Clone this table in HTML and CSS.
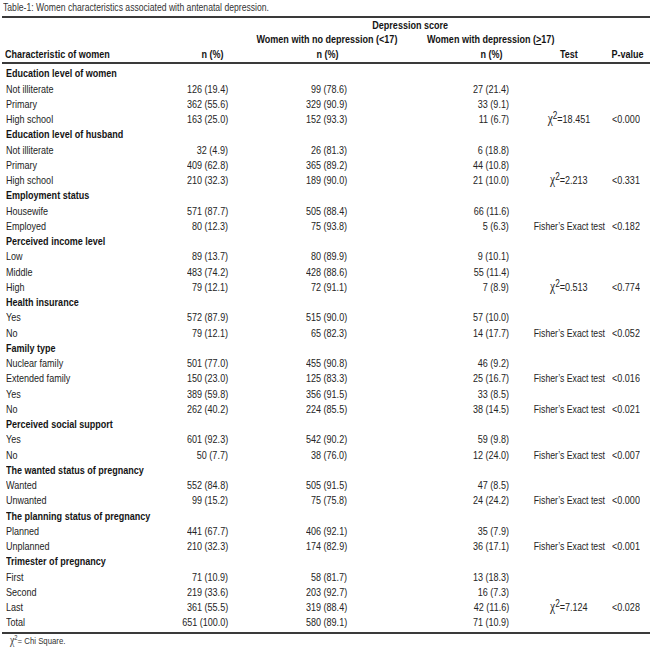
FILE: index.html
```html
<!DOCTYPE html>
<html lang="en">
<head>
<meta charset="utf-8">
<title>Table-1</title>
<link rel="stylesheet" href="styles.css">
</head>
<body>
<div class="caption"><span class="s">Table-1: Women characteristics associated with antenatal depression.</span></div>
<table class="tbl">
  <colgroup>
    <col class="w0"><col class="w1"><col class="w2"><col class="w3"><col class="w4"><col class="w5">
  </colgroup>
  <thead>
    <tr class="hr1">
      <th></th><th></th>
      <th colspan="2" class="h-dep"><span class="s">Depression score</span></th>
      <th></th><th></th>
    </tr>
    <tr class="hr2">
      <th></th><th></th>
      <th class="h-c2"><span class="s wide">Women with no depression (&lt;17)</span></th>
      <th class="h-c3"><span class="s wide">Women with depression (<span class="ge">&gt;</span>17)</span></th>
      <th></th><th></th>
    </tr>
    <tr class="hr3">
      <th class="h-lab"><span class="s">Characteristic of women</span></th>
      <th class="h-c1"><span class="s">n (%)</span></th>
      <th class="h-c2"><span class="s">n (%)</span></th>
      <th class="h-c3"><span class="s">n (%)</span></th>
      <th class="h-t"><span class="s">Test</span></th>
      <th class="h-p"><span class="s">P-value</span></th>
    </tr>
  </thead>
  <tbody>
    <tr class="cat first"><td colspan="6"><span class="s">Education level of women</span></td></tr>
    <tr><td class="lab"><span class="s">Not illiterate</span></td><td class="c1"><span class="s">126 (19.4)</span></td><td class="c2"><span class="s">99 (78.6)</span></td><td class="c3"><span class="s">27 (21.4)</span></td><td class="t"></td><td class="p"></td></tr>
    <tr><td class="lab"><span class="s">Primary</span></td><td class="c1"><span class="s">362 (55.6)</span></td><td class="c2"><span class="s">329 (90.9)</span></td><td class="c3"><span class="s">33 (9.1)</span></td><td class="t"></td><td class="p"></td></tr>
    <tr><td class="lab"><span class="s">High school</span></td><td class="c1"><span class="s">163 (25.0)</span></td><td class="c2"><span class="s">152 (93.3)</span></td><td class="c3"><span class="s">11 (6.7)</span></td><td class="t"><span class="s"><span class="chi">χ</span><sup>2</sup>=18.451</span></td><td class="p"><span class="s">&lt;0.000</span></td></tr>

    <tr class="cat"><td colspan="6"><span class="s">Education level of husband</span></td></tr>
    <tr><td class="lab"><span class="s">Not illiterate</span></td><td class="c1"><span class="s">32 (4.9)</span></td><td class="c2"><span class="s">26 (81.3)</span></td><td class="c3"><span class="s">6 (18.8)</span></td><td class="t"></td><td class="p"></td></tr>
    <tr><td class="lab"><span class="s">Primary</span></td><td class="c1"><span class="s">409 (62.8)</span></td><td class="c2"><span class="s">365 (89.2)</span></td><td class="c3"><span class="s">44 (10.8)</span></td><td class="t"></td><td class="p"></td></tr>
    <tr><td class="lab"><span class="s">High school</span></td><td class="c1"><span class="s">210 (32.3)</span></td><td class="c2"><span class="s">189 (90.0)</span></td><td class="c3"><span class="s">21 (10.0)</span></td><td class="t"><span class="s"><span class="chi">χ</span><sup>2</sup>=2.213</span></td><td class="p"><span class="s">&lt;0.331</span></td></tr>

    <tr class="cat"><td colspan="6"><span class="s">Employment status</span></td></tr>
    <tr><td class="lab"><span class="s">Housewife</span></td><td class="c1"><span class="s">571 (87.7)</span></td><td class="c2"><span class="s">505 (88.4)</span></td><td class="c3"><span class="s">66 (11.6)</span></td><td class="t"></td><td class="p"></td></tr>
    <tr><td class="lab"><span class="s">Employed</span></td><td class="c1"><span class="s">80 (12.3)</span></td><td class="c2"><span class="s">75 (93.8)</span></td><td class="c3"><span class="s">5 (6.3)</span></td><td class="t"><span class="s fx">Fisher’s Exact test</span></td><td class="p"><span class="s">&lt;0.182</span></td></tr>

    <tr class="cat"><td colspan="6"><span class="s">Perceived income level</span></td></tr>
    <tr><td class="lab"><span class="s">Low</span></td><td class="c1"><span class="s">89 (13.7)</span></td><td class="c2"><span class="s">80 (89.9)</span></td><td class="c3"><span class="s">9 (10.1)</span></td><td class="t"></td><td class="p"></td></tr>
    <tr><td class="lab"><span class="s">Middle</span></td><td class="c1"><span class="s">483 (74.2)</span></td><td class="c2"><span class="s">428 (88.6)</span></td><td class="c3"><span class="s">55 (11.4)</span></td><td class="t"></td><td class="p"></td></tr>
    <tr><td class="lab"><span class="s">High</span></td><td class="c1"><span class="s">79 (12.1)</span></td><td class="c2"><span class="s">72 (91.1)</span></td><td class="c3"><span class="s">7 (8.9)</span></td><td class="t"><span class="s"><span class="chi">χ</span><sup>2</sup>=0.513</span></td><td class="p"><span class="s">&lt;0.774</span></td></tr>

    <tr class="cat"><td colspan="6"><span class="s">Health insurance</span></td></tr>
    <tr><td class="lab"><span class="s">Yes</span></td><td class="c1"><span class="s">572 (87.9)</span></td><td class="c2"><span class="s">515 (90.0)</span></td><td class="c3"><span class="s">57 (10.0)</span></td><td class="t"></td><td class="p"></td></tr>
    <tr><td class="lab"><span class="s">No</span></td><td class="c1"><span class="s">79 (12.1)</span></td><td class="c2"><span class="s">65 (82.3)</span></td><td class="c3"><span class="s">14 (17.7)</span></td><td class="t"><span class="s fx">Fisher’s Exact test</span></td><td class="p"><span class="s">&lt;0.052</span></td></tr>

    <tr class="cat"><td colspan="6"><span class="s">Family type</span></td></tr>
    <tr><td class="lab"><span class="s">Nuclear family</span></td><td class="c1"><span class="s">501 (77.0)</span></td><td class="c2"><span class="s">455 (90.8)</span></td><td class="c3"><span class="s">46 (9.2)</span></td><td class="t"></td><td class="p"></td></tr>
    <tr><td class="lab"><span class="s">Extended family</span></td><td class="c1"><span class="s">150 (23.0)</span></td><td class="c2"><span class="s">125 (83.3)</span></td><td class="c3"><span class="s">25 (16.7)</span></td><td class="t"><span class="s fx">Fisher’s Exact test</span></td><td class="p"><span class="s">&lt;0.016</span></td></tr>
    <tr><td class="lab"><span class="s">Yes</span></td><td class="c1"><span class="s">389 (59.8)</span></td><td class="c2"><span class="s">356 (91.5)</span></td><td class="c3"><span class="s">33 (8.5)</span></td><td class="t"></td><td class="p"></td></tr>
    <tr><td class="lab"><span class="s">No</span></td><td class="c1"><span class="s">262 (40.2)</span></td><td class="c2"><span class="s">224 (85.5)</span></td><td class="c3"><span class="s">38 (14.5)</span></td><td class="t"><span class="s fx">Fisher’s Exact test</span></td><td class="p"><span class="s">&lt;0.021</span></td></tr>

    <tr class="cat"><td colspan="6"><span class="s">Perceived social support</span></td></tr>
    <tr><td class="lab"><span class="s">Yes</span></td><td class="c1"><span class="s">601 (92.3)</span></td><td class="c2"><span class="s">542 (90.2)</span></td><td class="c3"><span class="s">59 (9.8)</span></td><td class="t"></td><td class="p"></td></tr>
    <tr><td class="lab"><span class="s">No</span></td><td class="c1"><span class="s">50 (7.7)</span></td><td class="c2"><span class="s">38 (76.0)</span></td><td class="c3"><span class="s">12 (24.0)</span></td><td class="t"><span class="s fx">Fisher’s Exact test</span></td><td class="p"><span class="s">&lt;0.007</span></td></tr>

    <tr class="cat"><td colspan="6"><span class="s">The wanted status of pregnancy</span></td></tr>
    <tr><td class="lab"><span class="s">Wanted</span></td><td class="c1"><span class="s">552 (84.8)</span></td><td class="c2"><span class="s">505 (91.5)</span></td><td class="c3"><span class="s">47 (8.5)</span></td><td class="t"></td><td class="p"></td></tr>
    <tr><td class="lab"><span class="s">Unwanted</span></td><td class="c1"><span class="s">99 (15.2)</span></td><td class="c2"><span class="s">75 (75.8)</span></td><td class="c3"><span class="s">24 (24.2)</span></td><td class="t"><span class="s fx">Fisher’s Exact test</span></td><td class="p"><span class="s">&lt;0.000</span></td></tr>

    <tr class="cat"><td colspan="6"><span class="s">The planning status of pregnancy</span></td></tr>
    <tr><td class="lab"><span class="s">Planned</span></td><td class="c1"><span class="s">441 (67.7)</span></td><td class="c2"><span class="s">406 (92.1)</span></td><td class="c3"><span class="s">35 (7.9)</span></td><td class="t"></td><td class="p"></td></tr>
    <tr><td class="lab"><span class="s">Unplanned</span></td><td class="c1"><span class="s">210 (32.3)</span></td><td class="c2"><span class="s">174 (82.9)</span></td><td class="c3"><span class="s">36 (17.1)</span></td><td class="t"><span class="s fx">Fisher’s Exact test</span></td><td class="p"><span class="s">&lt;0.001</span></td></tr>

    <tr class="cat"><td colspan="6"><span class="s">Trimester of pregnancy</span></td></tr>
    <tr><td class="lab"><span class="s">First</span></td><td class="c1"><span class="s">71 (10.9)</span></td><td class="c2"><span class="s">58 (81.7)</span></td><td class="c3"><span class="s">13 (18.3)</span></td><td class="t"></td><td class="p"></td></tr>
    <tr><td class="lab"><span class="s">Second</span></td><td class="c1"><span class="s">219 (33.6)</span></td><td class="c2"><span class="s">203 (92.7)</span></td><td class="c3"><span class="s">16 (7.3)</span></td><td class="t"></td><td class="p"></td></tr>
    <tr><td class="lab"><span class="s">Last</span></td><td class="c1"><span class="s">361 (55.5)</span></td><td class="c2"><span class="s">319 (88.4)</span></td><td class="c3"><span class="s">42 (11.6)</span></td><td class="t"><span class="s"><span class="chi">χ</span><sup>2</sup>=7.124</span></td><td class="p"><span class="s">&lt;0.028</span></td></tr>
    <tr class="last"><td class="lab"><span class="s">Total</span></td><td class="c1"><span class="s">651 (100.0)</span></td><td class="c2"><span class="s">580 (89.1)</span></td><td class="c3"><span class="s">71 (10.9)</span></td><td class="t"></td><td class="p"></td></tr>
  </tbody>
</table>
<div class="foot"><span class="s"><span class="chi">χ</span><sup>2</sup>= Chi Square.</span></div>
</body>
</html>
```
FILE: styles.css
```css
html, body {
  margin: 0;
  padding: 0;
  background: #ffffff;
}
body {
  font-family: "Liberation Sans", Arial, sans-serif;
  font-size: 11px;
  color: #242424;
}
/* narrow face: the Arial-metric sans drawn at Arial Narrow width */
.s {
  display: inline-block;
  white-space: nowrap;
  transform: scaleX(0.82);
  transform-origin: center center;
}
.caption .s,
.foot .s,
.lab .s,
.cat .s,
.h-lab .s { transform-origin: left center; }
.c1 .s,
.c2 .s,
.c3 .s { transform-origin: right center; }

.caption {
  height: 14px;
  line-height: 14px;
  font-size: 10.5px;
  padding-left: 3px;
  white-space: nowrap;
  color: #333;
}
.tbl {
  border-collapse: collapse;
  table-layout: fixed;
  width: 648px;
  margin: 2px 0 0 2px;
  border-top: 2px solid #3a3a3a;
  border-bottom: 2px solid #3a3a3a;
}
.w0 { width: 163px; }
.w1 { width: 100px; }
.w2 { width: 155px; }
.w3 { width: 110px; }
.w4 { width: 78px; }
.w5 { width: 42px; }

.tbl th {
  padding: 0;
  font-weight: bold;
  color: #141414;
  white-space: nowrap;
}
.hr1 th { height: 14px; line-height: 14px; }
.hr2 th { height: 15px; line-height: 15px; }
.hr3 th { height: 15px; line-height: 15px; border-bottom: 2px solid #3a3a3a; }

.h-dep { text-align: center; padding-left: 25px !important; }
.h-lab { text-align: left; padding-left: 3px !important; }
.h-c1 { text-align: center; padding-right: 6px !important; }
.h-c2 { text-align: center; padding-right: 31px !important; }
.h-c3 { text-align: center; padding-left: 32px !important; }
.h-t { text-align: center; }
.h-p { text-align: center; padding-right: 7px !important; }

.wide { margin: 0 -45px; }
.fx {
  font-size: 10.6px;
  margin: 0 -20px;
}
.ge {
  text-decoration: underline;
  text-underline-offset: 1px;
}

.tbl td {
  padding: 0;
  height: 15.25px;
  line-height: 15.25px;
  white-space: nowrap;
}
.first td { padding-top: 2.4px; }
.last td { padding-bottom: 1.5px; }
.cat td {
  font-weight: bold;
  color: #141414;
  padding-left: 4px;
}
.lab { padding-left: 4px !important; }
.c1 { text-align: right; padding-right: 37px !important; }
.c2 { text-align: right; padding-right: 73px !important; }
.c3 { text-align: right; padding-right: 21px !important; }
.t { text-align: center; }
.p { text-align: center; padding-right: 7px !important; }

.chi {
  font-family: "Liberation Serif", "DejaVu Serif", serif;
  font-size: 14px;
  line-height: 0;
}
sup {
  font-size: 10px;
  line-height: 0;
  vertical-align: 4px;
}
.foot {
  padding-left: 10px;
  font-size: 9.5px;
  line-height: 14px;
  height: 14px;
  white-space: nowrap;
  color: #333;
}
.foot .chi { font-size: 12px; }
.foot sup { font-size: 7px; vertical-align: 4px; }
```
